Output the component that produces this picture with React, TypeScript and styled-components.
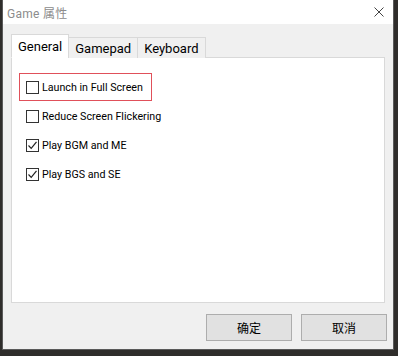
import React from 'react';
import styled, { createGlobalStyle } from 'styled-components';

const GlobalStyle = createGlobalStyle`
  html, body {
    margin: 0;
    padding: 0;
    background: #2f2d2b;
  }
  body {
    width: 398px;
    height: 356px;
    overflow: hidden;
  }
`;

const uiFont = `Roboto, "Noto Sans CJK SC", sans-serif`;

const Window = styled.div`
  margin-left: 3px;
  width: 390px;
  height: 349px;
  background: #f0f0f0;
  display: flex;
  flex-direction: column;
  font-family: ${uiFont};
  font-size: 10.7px;
  color: #000;
  box-shadow: 0 0 0 1px #5a5a5a;
`;

const TitleBar = styled.div`
  height: 25px;
  background: #fff;
  display: flex;
  align-items: center;
  justify-content: space-between;
  padding: 0 9px 0 4px;
`;

const Title = styled.span`
  color: #8c8c8c;
  font-size: 12px;
  letter-spacing: 0.3px;
`;

const CloseIcon = styled.svg`
  width: 10px;
  height: 10px;
  display: block;
`;

const Body = styled.div`
  flex: 1;
  display: flex;
  flex-direction: column;
  padding: 10px 8px 8px 8px;
`;

const TabStrip = styled.div`
  display: flex;
  align-items: flex-end;
  height: 24px;
  position: relative;
  z-index: 1;
`;

const Tab = styled.div<{ active?: boolean }>`
  height: ${p => (p.active ? '24px' : '21px')};
  padding: 0 ${p => (p.active ? '6px' : '6px')};
  display: flex;
  align-items: center;
  background: ${p => (p.active ? '#fff' : '#f0f0f0')};
  border: 1px solid #d9d9d9;
  border-bottom: ${p => (p.active ? '1px solid #fff' : 'none')};
  margin-left: ${p => (p.active ? '0' : '-1px')};
  box-sizing: border-box;
  font-size: 13px;
  white-space: nowrap;
`;

const Panel = styled.div`
  margin-top: -1px;
  height: 246px;
  background: #fff;
  border: 1px solid #d9d9d9;
  box-sizing: border-box;
  padding: 15px 7px 0 7px;
  display: flex;
  flex-direction: column;
  gap: 1px;
`;

const Row = styled.label<{ highlight?: boolean }>`
  height: 28px;
  box-sizing: border-box;
  display: flex;
  align-items: center;
  gap: 3px;
  padding-left: ${p => (p.highlight ? '6px' : '7px')};
  width: ${p => (p.highlight ? '133px' : 'auto')};
  border: ${p => (p.highlight ? '1px solid #e0505a' : 'none')};
  white-space: nowrap;
`;

const Box = styled.span`
  width: 13px;
  height: 13px;
  box-sizing: border-box;
  border: 1px solid #333;
  background: #fff;
  display: flex;
  align-items: center;
  justify-content: center;
  flex-shrink: 0;
`;

const Footer = styled.div`
  display: flex;
  justify-content: flex-end;
  gap: 9px;
  margin-top: 11px;
  margin-right: -2px;
`;

const Button = styled.button`
  width: 86px;
  height: 27px;
  background: #e1e1e1;
  border: 1px solid #adadad;
  font-family: ${uiFont};
  font-size: 12px;
  color: #000;
  padding: 0;
`;

const options = [
  { label: 'Launch in Full Screen', checked: false, highlight: true },
  { label: 'Reduce Screen Flickering', checked: false },
  { label: 'Play BGM and ME', checked: true },
  { label: 'Play BGS and SE', checked: true },
];

const Check = () => (
  <svg width="11" height="11" viewBox="0 0 11 11">
    <path d="M1.5 5.5 L4.2 8.3 L9.5 1.8" fill="none" stroke="#222" strokeWidth="1.2" />
  </svg>
);

export default function App() {
  return (
    <>
      <GlobalStyle />
      <Window>
        <TitleBar>
          <Title>Game 属性</Title>
          <CloseIcon viewBox="0 0 10 10">
            <path d="M0.5 0.5 L9.5 9.5 M9.5 0.5 L0.5 9.5" stroke="#444" strokeWidth="1" />
          </CloseIcon>
        </TitleBar>
        <Body>
          <TabStrip>
            <Tab active>General</Tab>
            <Tab>Gamepad</Tab>
            <Tab>Keyboard</Tab>
          </TabStrip>
          <Panel>
            {options.map(o => (
              <Row key={o.label} highlight={o.highlight}>
                <Box>{o.checked && <Check />}</Box>
                {o.label}
              </Row>
            ))}
          </Panel>
          <Footer>
            <Button>确定</Button>
            <Button>取消</Button>
          </Footer>
        </Body>
      </Window>
    </>
  );
}
